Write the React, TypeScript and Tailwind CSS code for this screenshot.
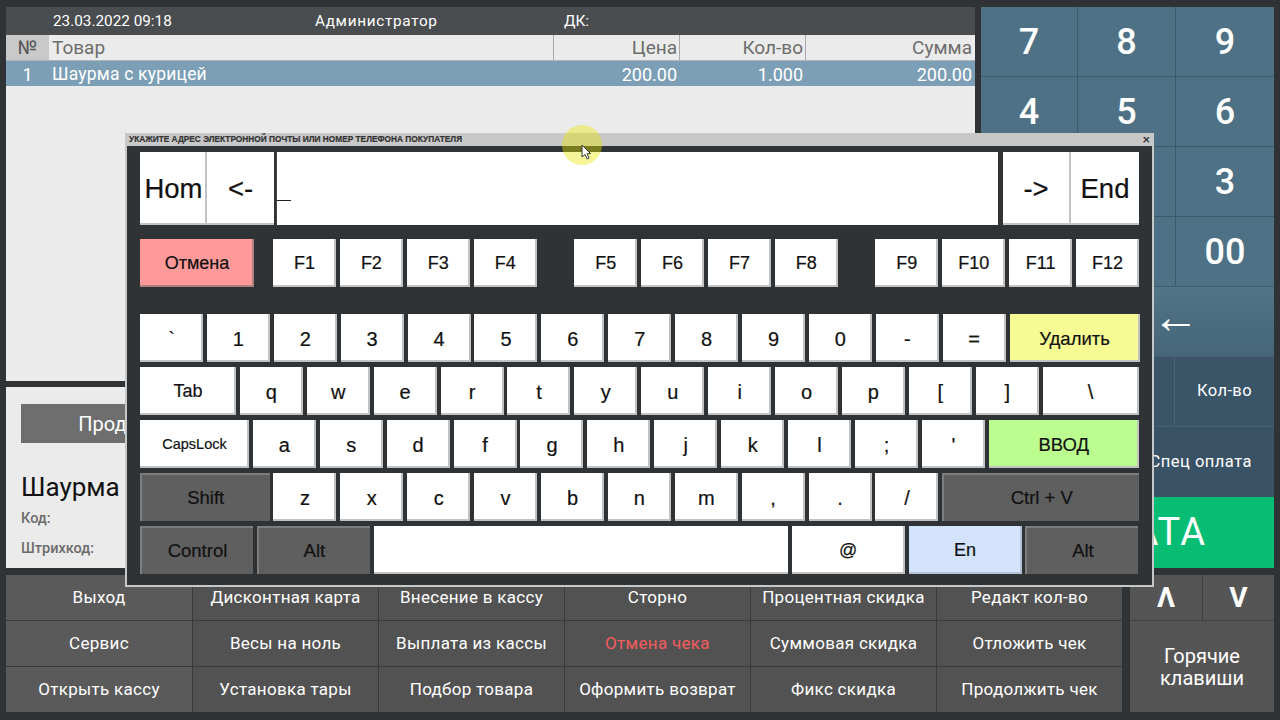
const menu = [
  ["Выход", "Дисконтная карта", "Внесение в кассу", "Сторно", "Процентная скидка", "Редакт кол-во"],
  ["Сервис", "Весы на ноль", "Выплата из кассы", "Отмена чека", "Суммовая скидка", "Отложить чек"],
  ["Открыть кассу", "Установка тары", "Подбор товара", "Оформить возврат", "Фикс скидка", "Продолжить чек"],
];

const fnGroups = [
  ["F1", "F2", "F3", "F4"],
  ["F5", "F6", "F7", "F8"],
  ["F9", "F10", "F11", "F12"],
];

// the blank cells sit under the dialog in the reference
const numpad = ["7", "8", "9", "4", "5", "6", "", "", "3", "", "", "00"];

function Key({ label, className = "w-[63px] text-[20px]" }: { label: string; className?: string }) {
  return (
    <div className={`h-[48px] shrink-0 flex items-center justify-center pt-[3px] pl-[2px] bg-white border-r-2 border-b-2 border-[#c2c2c2] text-[#111] ${className}`}>
      {label}
    </div>
  );
}

function DarkKey({ label, className }: { label: string; className: string }) {
  return (
    <div className={`h-[48px] shrink-0 flex items-center justify-center bg-[#5f5f5f] border-t-2 border-l-2 border-[#7d7d7d] border-r-[#262626] border-b-[#262626] text-[18.5px] text-[#111] ${className}`}>
      {label}
    </div>
  );
}

function Row({ children, className = "" }: { children: React.ReactNode; className?: string }) {
  return <div className={`flex gap-[3.9px] ${className}`}>{children}</div>;
}

function Letters({ keys }: { keys: string }) {
  return (
    <>
      {keys.split("").map((k, i) => (
        <Key key={i} label={k} />
      ))}
    </>
  );
}

function Keyboard() {
  return (
    <div className="absolute left-[125px] top-[133px] w-[1029px] h-[454px] border-2 border-t-0 border-[#c4c8c8] bg-[#2f3335] font-['Liberation_Sans',sans-serif] [-webkit-text-stroke:0.2px]">
      <div className="h-[13px] flex items-center justify-between bg-[#c8c8c8] pl-[2px] pr-[2px]">
        <span className="text-[8.3px] font-bold text-[#333] whitespace-nowrap">
          УКАЖИТЕ АДРЕС ЭЛЕКТРОННОЙ ПОЧТЫ ИЛИ НОМЕР ТЕЛЕФОНА ПОКУПАТЕЛЯ
        </span>
        <span className="text-[13px] leading-none text-[#222]">×</span>
      </div>
      <div className="pl-[13px] pt-[6px]">
        <div className="flex h-[73px] text-[27.5px] text-[#111]">
          <div className="w-[67px] flex items-center justify-center pt-[3px] pl-[2px] bg-white border-b-2 border-r-2 border-[#c2c2c2]">Hom</div>
          <div className="w-[67px] flex items-center justify-center pt-[3px] bg-white border-b-2 border-[#c2c2c2]">&lt;-</div>
          <div className="ml-[2px] w-[722px] relative bg-white border-l border-[#444]">
            <div className="absolute left-0 top-[48px] w-[14px] h-[1px] bg-[#222]" />
          </div>
          <div className="ml-[5px] w-[68px] flex items-center justify-center pt-[3px] bg-white border-b-2 border-r-2 border-[#c2c2c2]">-&gt;</div>
          <div className="w-[68px] flex items-center justify-center pt-[3px] bg-white border-b-2 border-[#c2c2c2]">End</div>
        </div>
        <div className="flex mt-[14px]">
          <div className="w-[114px] h-[48px] flex items-center justify-center pt-[3px] pl-[2px] bg-[#ff9a9a] border-r-2 border-b-2 border-[#b08080] text-[18px] text-[#111]">
            Отмена
          </div>
          <div className="flex ml-[19px] gap-[37.5px]">
            {fnGroups.map((g, i) => (
              <Row key={i}>
                {g.map((k) => (
                  <Key key={k} label={k} className="w-[63px] text-[18px]" />
                ))}
              </Row>
            ))}
          </div>
        </div>
        <div className="flex flex-col gap-[5px] mt-[27px]">
          <Row>
            <Letters keys="`1234567890-=" />
            <div className="w-[130px] h-[48px] flex items-center justify-center pt-[3px] pl-[2px] bg-[#f7fb94] border-r-2 border-b-2 border-[#c2c2c2] text-[18.5px] text-[#111]">
              Удалить
            </div>
          </Row>
          <Row>
            <Key label="Tab" className="w-[96px] text-[18px]" />
            <Letters keys="qwertyuiop[]" />
            <Key label="\" className="w-[96px] text-[20px]" />
          </Row>
          <Row>
            <Key label="CapsLock" className="w-[109px] text-[14.5px]" />
            <Letters keys="asdfghjkl;'" />
            <div className="w-[150px] h-[48px] flex items-center justify-center pt-[3px] pl-[2px] bg-[#bcfd90] border-r-2 border-b-2 border-[#c2c2c2] text-[18.5px] text-[#111]">
              ВВОД
            </div>
          </Row>
          <Row>
            <DarkKey label="Shift" className="w-[129.5px]" />
            <Letters keys="zxcvbnm,./" />
            <DarkKey label="Ctrl + V" className="w-[197px]" />
          </Row>
          <Row>
            <DarkKey label="Control" className="w-[113px]" />
            <DarkKey label="Alt" className="w-[113px]" />
            <div className="w-[414px] h-[48px] bg-white border-b-2 border-[#c2c2c2]" />
            <Key label="@" className="w-[113px] text-[18px]" />
            <div className="w-[113px] h-[48px] flex items-center justify-center pt-[3px] pl-[2px] bg-[#d3e3fb] border-b-2 border-r-2 border-[#b4c2d6] text-[18px] text-[#111]">
              En
            </div>
            <DarkKey label="Alt" className="w-[113px]" />
          </Row>
        </div>
      </div>
    </div>
  );
}

function Cursor() {
  return (
    <svg className="absolute left-[562px] top-[125px]" width="40" height="40" viewBox="0 0 40 40">
      <circle cx="20" cy="20" r="20" fill="#e8e800" fillOpacity="0.4" />
      <path d="M20 20 L20 32 L23 29.5 L25.2 34 L27 33 L25 28.8 L28.5 28.5 Z" fill="#fff" stroke="#333" strokeWidth="1" />
    </svg>
  );
}

export default function App() {
  return (
    <div className="relative w-[1280px] h-[720px] overflow-hidden bg-[#2f3335] pt-[7px] pl-[6px] font-['Roboto',sans-serif]">
      <div className="flex gap-[6px] h-[561px]">
        <div className="w-[969px] flex flex-col gap-[6px]">
          <div className="h-[374px] bg-[#ebebeb] flex flex-col">
            <div className="h-[28px] flex items-center bg-[#4a4d4f] text-white text-[15.3px]">
              <span className="ml-[47px] w-[262px]">23.03.2022 09:18</span>
              <span className="w-[249px] tracking-[0.7px]">Администратор</span>
              <span>ДК:</span>
            </div>
            <div className="h-[26px] flex text-[19px] text-[#6d6d6d] border-b border-[#a9b6bf]">
              <div className="w-[43px] bg-[#c9c9c9] flex items-center justify-center pt-[2px] text-[#555]">№</div>
              <div className="w-[505px] flex items-center pt-[2px] pl-[3px] border-r border-[#a8a8a8]">Товар</div>
              <div className="w-[126px] flex items-center justify-end pt-[2px] pr-[2px] border-r border-[#a8a8a8]">Цена</div>
              <div className="w-[126px] flex items-center justify-end pt-[2px] pr-[2px] border-r border-[#a8a8a8]">Кол-во</div>
              <div className="flex-1 flex items-center justify-end pt-[2px] pr-[3px]">Сумма</div>
            </div>
            <div className="h-[25px] flex items-center pt-[2px] bg-[#7c9fb6] text-white text-[18px]">
              <div className="w-[43px] text-center">1</div>
              <div className="w-[505px] pl-[3px] text-[17.5px] tracking-[0.2px]">Шаурма с курицей</div>
              <div className="w-[126px] text-right pr-[3px]">200.00</div>
              <div className="w-[126px] text-right pr-[3px]">1.000</div>
              <div className="flex-1 text-right pr-[3px]">200.00</div>
            </div>
          </div>
          <div className="flex-1 bg-[#ebebeb] pl-[15px] pt-[17px]">
            <div className="w-[200px] h-[39px] flex items-center justify-center bg-[#6e6e6e] text-white text-[20px]">
              Продажа
            </div>
            <div className="mt-[27px] text-[26px] leading-[34px] text-[#111]">Шаурма</div>
            <div className="mt-[6px] text-[14.5px] leading-[17px] font-medium text-[#6b6b6b]">Код:</div>
            <div className="mt-[13px] text-[14.5px] leading-[17px] font-medium text-[#6b6b6b]">Штрихкод:</div>
          </div>
        </div>
        <div className="w-[293px] flex flex-col text-white">
          <div className="grid grid-cols-[96px_97px_98px] h-[279px] bg-[#3c5a6c] gap-px">
            {numpad.map((n, i) => (
              <div key={i} className="flex items-center justify-center bg-[#4e7185] text-[36px] font-medium">{n}</div>
            ))}
          </div>
          <div className="h-[70px] flex border-t border-[#3f5c6e] bg-gradient-to-b from-[#527587] to-[#466579]">
            <div className="w-[96px]" />
            <div className="flex-1 flex items-center justify-center pb-[10px] text-[47px] leading-none">←</div>
          </div>
          <div className="h-[71px] flex border-y border-[#4a6173] bg-[#3a5468] text-[16.5px] tracking-[0.4px]">
            <div className="w-[194px] border-r border-[#4a6173]" />
            <div className="flex-1 flex items-center justify-center">Кол-во</div>
          </div>
          <div className="h-[70px] flex bg-[#3a5266] text-[16.5px] tracking-[0.5px]">
            <div className="flex-1" />
            <div className="flex-1 flex items-center justify-center">Спец оплата</div>
          </div>
          <div className="flex-1 flex items-center justify-center bg-[#07bd74] text-[38px] tracking-[1.5px]">ОПЛАТА</div>
        </div>
      </div>
      <div className="flex gap-[8px] mt-[7px] h-[137px]">
        <div className="w-[1116px] grid grid-cols-[repeat(6,186px)] grid-rows-3 gap-y-px bg-[#3a3a3a] text-white text-[17px] tracking-[0.3px]">
          {menu.flat().map((m, i) => (
            <div
              key={m}
              className={`flex items-center justify-center border-[#3a3a3a] ${i % 6 === 0 ? "bg-[#5a5a5a]" : "bg-[#525252] border-l"} ${m === "Отмена чека" ? "text-[#f25c5c]" : ""}`}
            >
              {m}
            </div>
          ))}
        </div>
        <div className="w-[144px] flex flex-col gap-px bg-[#3f3f3f] text-white">
          <div className="h-[45px] flex gap-px">
            <div className="w-[72px] flex items-center justify-center bg-[#555] text-[28px] font-bold">Λ</div>
            <div className="flex-1 flex items-center justify-center bg-[#555] text-[28px] font-bold">V</div>
          </div>
          <div className="flex-1 flex items-center justify-center pt-[1px] bg-[#555] text-center text-[20px] leading-[22px]">
            Горячие<br />клавиши
          </div>
        </div>
      </div>
      <Keyboard />
      <Cursor />
    </div>
  );
}
